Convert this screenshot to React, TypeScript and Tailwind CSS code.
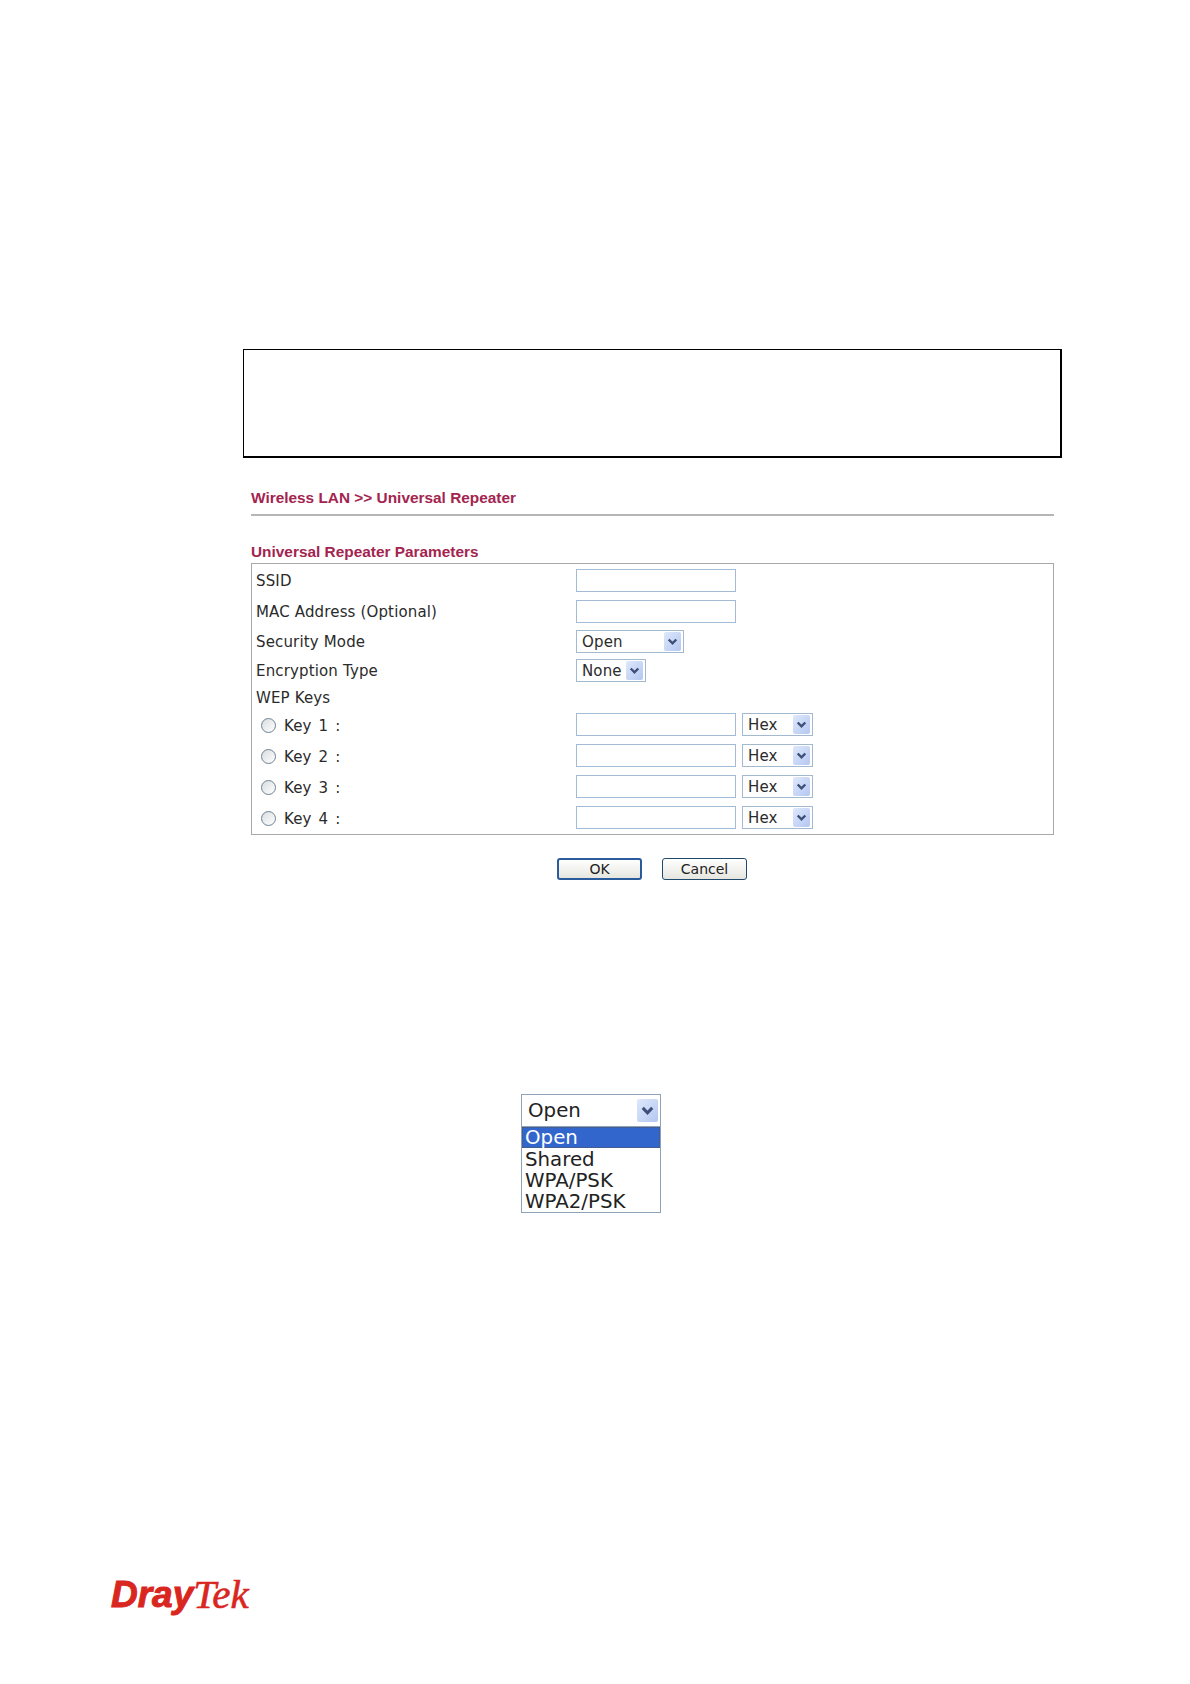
const keys = [1, 2, 3, 4];

function Chevron({ size = 'small' }: { size?: 'small' | 'large' }) {
  return (
    <span
      className={`flex shrink-0 items-center justify-center rounded-[2px] bg-gradient-to-br from-[#dfe8fb] to-[#b4c7f2] ${
        size === 'large' ? 'h-[23px] w-[21px]' : 'h-[19px] w-[17px]'
      }`}
    >
      <svg viewBox="0 0 10 8" className={size === 'large' ? 'h-[10px] w-[13px]' : 'h-[8px] w-[11px]'}>
        <path d="M1.2 1.5 5 5.4 8.8 1.5" fill="none" stroke="#3d4f78" strokeWidth="2.4" />
      </svg>
    </span>
  );
}

function Select({ value, width }: { value: string; width: string }) {
  return (
    <div className={`flex h-[23px] items-center justify-between border border-[#a3b9cf] pl-[5px] pr-[2px] ${width}`}>
      <span className="mt-[2px] text-[15px] tracking-[0.15px] text-[#2b2b2b]">{value}</span>
      <Chevron />
    </div>
  );
}

function TextBox() {
  return <input className="h-[23px] w-[160px] border border-[#a3bcd6] bg-white" readOnly />;
}

function Row({ label, className, children }: { label: string; className: string; children: React.ReactNode }) {
  return (
    <div className={`flex h-[23px] items-center ${className}`}>
      <span className="mt-[2px] w-[320px] shrink-0 text-[15px] tracking-[0.15px] text-[#2b2b2b]">{label}</span>
      {children}
    </div>
  );
}

function Button({ label, primary }: { label: string; primary?: boolean }) {
  return (
    <button
      className={`h-[22px] w-[85px] rounded-[3px] bg-gradient-to-b from-white to-[#e6e6e0] text-[14px] leading-none text-[#222] ${
        primary ? 'border-2 border-[#2a5c9c]' : 'border border-[#1f4a6e]'
      }`}
    >
      {label}
    </button>
  );
}

export default function App() {
  return (
    <div className="h-[1684px] w-[1190px] overflow-hidden bg-white font-['DejaVu_Sans',sans-serif]">
      <div className="ml-[243px] mt-[349px] h-[109px] w-[819px] border-b-2 border-l border-r-2 border-t border-black" />

      <div className="ml-[251px] w-[803px]">
        <h1 className="mt-[30px] h-[19px] font-['Liberation_Sans',sans-serif] text-[15.4px] font-bold leading-[19px] text-[#a3244f]">
          Wireless LAN &gt;&gt; Universal Repeater
        </h1>
        <div className="mt-[7px] h-[2px] bg-[#b5b5b5]" />
        <h2 className="mb-[2px] mt-[26px] h-[19px] font-['Liberation_Sans',sans-serif] text-[15.4px] font-bold leading-[19px] text-[#a3244f]">
          Universal Repeater Parameters
        </h2>

        <div className="border border-[#a8a8a8] pb-[5px] pl-[4px] pt-[5px]">
          <Row label="SSID" className="">
            <TextBox />
          </Row>
          <Row label="MAC Address (Optional)" className="mt-[8px]">
            <TextBox />
          </Row>
          <Row label="Security Mode" className="mt-[7px]">
            <Select value="Open" width="w-[108px]" />
          </Row>
          <Row label="Encryption Type" className="mt-[6px]">
            <Select value="None" width="w-[70px]" />
          </Row>
          <div className="mt-[5px] h-[22px] text-[15px] leading-[23px] tracking-[0.15px] text-[#2b2b2b]">WEP Keys</div>
          {keys.map((key, index) => (
            <div key={key} className={`flex h-[23px] items-center ${index === 0 ? 'mt-[4px]' : 'mt-[8px]'}`}>
              <span className="ml-[5px] mt-[1px] h-[15px] w-[15px] rounded-full border border-[#6f8192] bg-gradient-to-br from-[#d9dde0] to-white" />
              <span className="ml-[8px] mt-[4px] w-[292px] text-[15px] tracking-[0.15px] text-[#2b2b2b] [word-spacing:2px]">
                Key {key} :
              </span>
              <TextBox />
              <div className="ml-[6px]">
                <Select value="Hex" width="w-[71px]" />
              </div>
            </div>
          ))}
        </div>

        <div className="ml-[306px] mt-[23px] flex gap-[20px]">
          <Button label="OK" primary />
          <Button label="Cancel" />
        </div>
      </div>

      <div className="ml-[521px] mt-[214px] w-[140px] border border-[#8ea3b7] text-[19.8px] leading-[21px] text-[#222]">
        <div className="flex h-[32px] items-center justify-between border-b border-[#8ea3b7] pl-[6px] pr-[2px]">
          <span>Open</span>
          <Chevron size="large" />
        </div>
        <div className="mb-[1px] border border-dotted border-[#555] bg-[#3366cc] pl-[2px] leading-[19px] text-white">Open</div>
        <div className="pl-[3px]">Shared</div>
        <div className="pl-[3px]">WPA/PSK</div>
        <div className="pl-[3px]">WPA2/PSK</div>
      </div>

      <div className="ml-[111px] mt-[362px] flex h-[40px] items-center text-[#d9261f]">
        <span className="font-['Liberation_Sans',sans-serif] text-[37px] font-bold italic [-webkit-text-stroke:1px_#d9261f]">
          Dray
        </span>
        <span className="font-['Liberation_Serif',serif] text-[41px] italic [-webkit-text-stroke:0.6px_#d9261f]">Tek</span>
      </div>
    </div>
  );
}
